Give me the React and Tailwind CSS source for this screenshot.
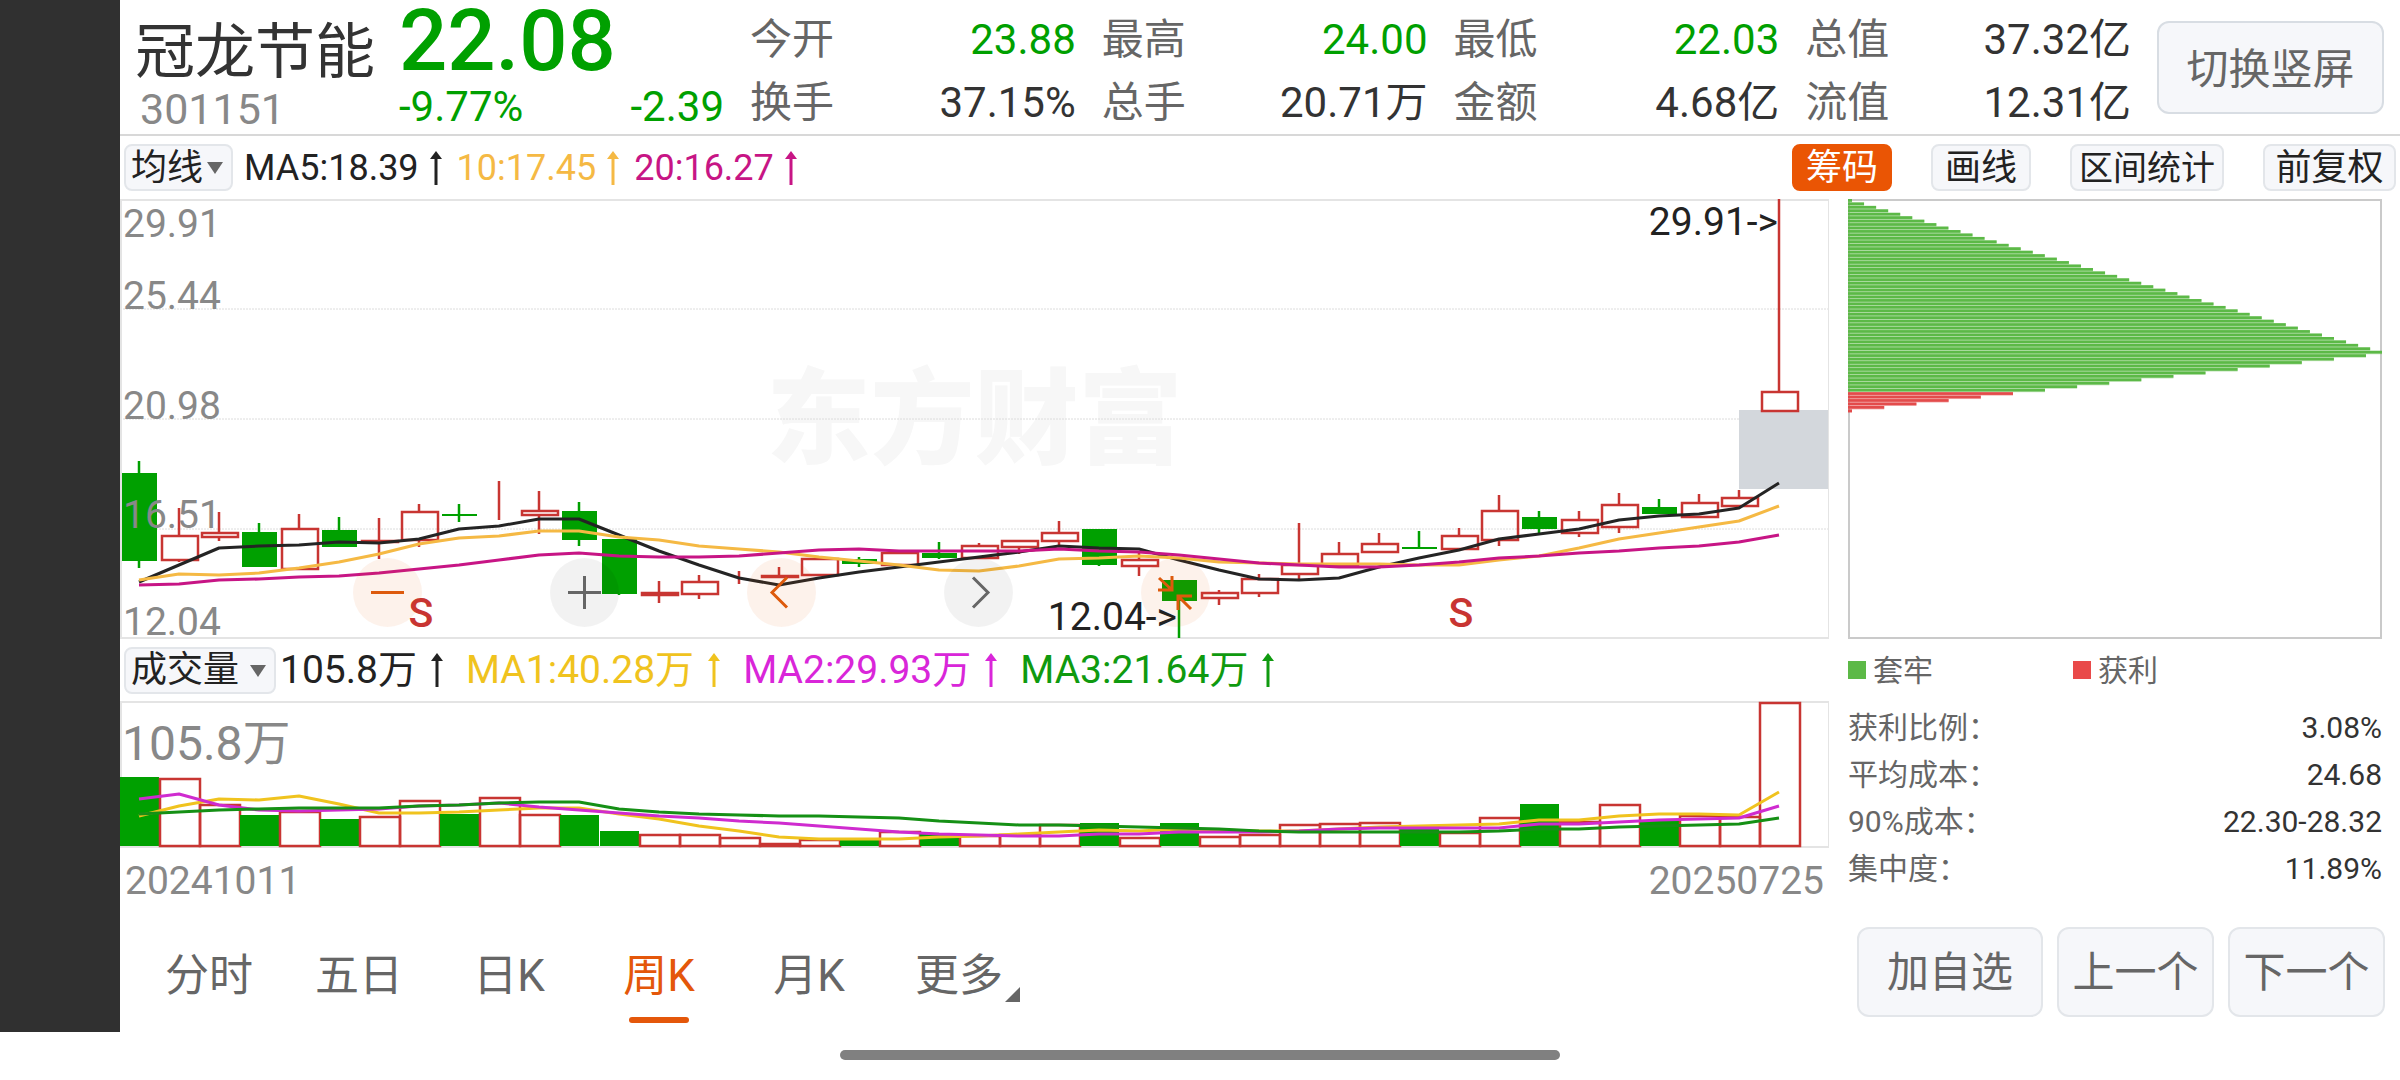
import React from 'react';
import clsx from 'clsx';

const CHART_W = 1709;
const CHART_H = 440;
const VOL_H = 147;
const STEP = 40;
const FIRST = 19;

const GREEN = '#00a000';
const RED = '#c83532';

// [direction, high, body top, body bottom, low]
const CANDLES = [
    ['d', 262, 274, 362, 369], ['u', 309, 337, 361, 363], ['u', 313, 334, 338, 342], ['d', 324, 333, 368, 368],
    ['u', 315, 330, 370, 370], ['d', 318, 331, 348, 348], ['u', 319, 342, 343, 360], ['u', 305, 313, 341, 348],
    ['d', 305, 315, 317, 323], ['u', 282, 318, 318, 321], ['u', 292, 312, 316, 335], ['d', 303, 312, 341, 347],
    ['d', 340, 340, 395, 396], ['u', 382, 394, 396, 404], ['u', 376, 383, 395, 400], ['u', 372, 380, 380, 385],
    ['u', 368, 377, 378, 379], ['u', 360, 360, 376, 377], ['d', 358, 360, 365, 368], ['u', 353, 354, 366, 366],
    ['d', 343, 354, 359, 360], ['u', 344, 347, 359, 359], ['u', 341, 342, 348, 355], ['u', 322, 334, 342, 347],
    ['d', 330, 330, 366, 367], ['u', 354, 361, 367, 377], ['d', 381, 381, 402, 439], ['u', 391, 394, 399, 406],
    ['u', 375, 380, 394, 398], ['u', 324, 366, 375, 380], ['u', 343, 355, 366, 366], ['u', 334, 345, 353, 353],
    ['d', 332, 348, 350, 350], ['u', 329, 337, 350, 350], ['u', 296, 312, 341, 347], ['d', 312, 318, 330, 334],
    ['u', 312, 321, 334, 338], ['u', 294, 306, 328, 334], ['d', 300, 308, 315, 315], ['u', 295, 304, 318, 318],
    ['u', 291, 299, 307, 307], ['u', 0, 193, 212, 212],
];

const MA5 = [383, 366, 349, 347, 346, 343, 344, 340, 330, 327, 320, 320, 336, 352, 366, 379, 386, 379, 373, 368, 363, 358, 353, 347, 349, 350, 361, 371, 380, 381, 379, 368, 359, 351, 340, 335, 330, 321, 317, 315, 309, 284];
const MA10 = [381, 375, 376, 374, 369, 363, 355, 345, 339, 337, 332, 332, 338, 341, 347, 350, 353, 358, 362, 366, 371, 372, 367, 360, 359, 357, 359, 363, 364, 365, 365, 365, 366, 366, 361, 357, 349, 340, 334, 328, 322, 307];
const MA20 = [386, 385, 381, 380, 378, 377, 374, 370, 366, 361, 356, 354, 357, 358, 358, 357, 354, 351, 350, 352, 352, 352, 352, 350, 352, 353, 356, 360, 364, 366, 368, 368, 366, 363, 359, 357, 354, 352, 349, 347, 343, 336];

const VOLUMES = [76, 78, 104, 114, 111, 118, 116, 100, 113, 97, 114, 114, 130, 134, 134, 137, 143, 139, 138, 131, 132, 135, 134, 124, 122, 137, 122, 136, 134, 124, 123, 122, 128, 132, 117, 103, 121, 104, 120, 115, 116, 2];
const VOL_MA1 = [115, 105, 98, 99, 95, 103, 112, 112, 111, 109, 107, 107, 113, 118, 125, 130, 136, 138, 138, 138, 136, 135, 133, 131, 129, 130, 128, 129, 130, 130, 128, 126, 125, 124, 123, 119, 119, 115, 113, 113, 114, 91];
const VOL_MA2 = [98, 93, 104, 109, 110, 109, 108, 105, 104, 102, 106, 109, 112, 115, 117, 120, 122, 125, 128, 131, 133, 134, 135, 135, 133, 133, 131, 131, 131, 130, 128, 127, 127, 127, 127, 123, 123, 121, 119, 118, 117, 105];
const VOL_MA3 = [113, 111, 109, 108, 107, 107, 107, 105, 104, 102, 101, 101, 108, 111, 113, 114, 115, 115, 116, 117, 120, 122, 124, 124, 125, 126, 127, 128, 130, 131, 131, 131, 131, 131, 130, 128, 128, 126, 125, 124, 123, 117];

// Width of each price level in the chip distribution
const CHIPS = [
    ...Array.from({ length: 45 }, (_, i) => ({ w: 4 + i * 12.05, loss: true })),
    ...Array.from({ length: 11 }, (_, i) => ({ w: 518 - i * 32.1, loss: true })),
    ...Array.from({ length: 6 }, (_, i) => ({ w: Math.max(4, 165 - i * 32.2), loss: false })),
];

const STATS = [
    ['今开', '23.88', true], ['最高', '24.00', true], ['最低', '22.03', true], ['总值', '37.32亿', false],
    ['换手', '37.15%', false], ['总手', '20.71万', false], ['金额', '4.68亿', false], ['流值', '12.31亿', false],
];

const CHIP_INFO = [
    ['获利比例：', '3.08%'],
    ['平均成本：', '24.68'],
    ['90%成本：', '22.30-28.32'],
    ['集中度：', '11.89%'],
];

const xAt = (i) => FIRST + i * STEP;
const toPoints = (values) => values.map((v, i) => `${xAt(i)},${v}`).join(' ');
const pct = (x) => `${(x / CHART_W) * 100}%`;

function Line({ values, color }) {
    return <polyline points={toPoints(values)} fill="none" stroke={color} strokeWidth="3" strokeLinejoin="round" />;
}

function UpArrow() {
    return (
        <svg className="w-3 h-[34px] shrink-0" viewBox="0 0 12 34" aria-hidden="true">
            <path d="M6 0 L12 8 H7.5 V34 H4.5 V8 H0 Z" fill="currentColor" />
        </svg>
    );
}

function MenuSelect({ label, value, className }) {
    return (
        <div className={clsx('relative flex items-center h-[47px] rounded-lg border-2 border-[#e3e6ea] bg-[#f6f7fa]', className)}>
            <select
                aria-label={label}
                className="w-full h-[54px] shrink-0 appearance-none bg-transparent pl-[5px] text-[36px] text-[#222]"
            >
                <option>{value}</option>
            </select>
            <svg className="absolute right-2 top-4 w-4 h-3 pointer-events-none" viewBox="0 0 16 12" aria-hidden="true">
                <path d="M0 0 H16 L8 12 Z" fill="#666" />
            </svg>
        </div>
    );
}

function Header() {
    return (
        <header className="flex h-[136px] border-b-2 border-[#d8d8d8] pr-4">
            <div className="w-[279px] pl-[15px] flex flex-col">
                <h1 className="text-[60px] leading-[60px] mt-[23px] text-[#333] whitespace-nowrap">冠龙节能</h1>
                <span className="pl-[5px] mt-[3px] text-[43px] leading-[46px] text-[#888]">301151</span>
            </div>
            <div className="w-[325px] flex flex-col text-[#00a000]">
                <span className="text-[85px] leading-[82px] font-medium">22.08</span>
                <div className="flex justify-between text-[42px] leading-[50px]">
                    <span>-9.77%</span>
                    <span>-2.39</span>
                </div>
            </div>
            <dl className="flex-1 grid grid-cols-4 auto-rows-[63px] gap-x-[26px] ml-[26px] mt-2 text-[42px] leading-[63px]">
                {STATS.map(([label, value, down]) => (
                    <div key={label} className="flex justify-between whitespace-nowrap">
                        <dt className="text-[#666]">{label}</dt>
                        <dd className={down ? 'text-[#00a000]' : 'text-[#333]'}>{value}</dd>
                    </div>
                ))}
            </dl>
            <button className="w-[227px] h-[93px] ml-[26px] mt-[21px] pt-1 rounded-xl border-2 border-[#d8dde3] bg-[#f6f7fa] text-[42px] text-[#666]">
                切换竖屏
            </button>
        </header>
    );
}

function Toolbar() {
    const button = 'h-[47px] rounded-lg border-2 leading-[42px] whitespace-nowrap';
    const plain = 'border-[#e3e6ea] bg-[#f6f7fa] text-[#222]';
    return (
        <div className="flex items-center h-[63px] px-1 text-[36px]">
            <MenuSelect label="主图指标" value="均线" className="w-[109px]" />
            <div className="flex items-center gap-[11px] ml-[11px] text-[#222]">
                <span>MA5:18.39</span>
                <UpArrow />
            </div>
            <div className="flex items-center gap-[11px] ml-[15px] text-[#f5b944]">
                <span>10:17.45</span>
                <UpArrow />
            </div>
            <div className="flex items-center gap-[11px] ml-[15px] text-[#c71585]">
                <span>20:16.27</span>
                <UpArrow />
            </div>
            <div className="flex gap-[39px] ml-auto">
                <button className={clsx(button, 'w-[100px] border-[#ea5504] bg-[#ea5504] text-white')}>筹码</button>
                <button className={clsx(button, plain, 'w-[100px]')}>画线</button>
                <button className={clsx(button, plain, 'w-[154px] text-[34px]')}>区间统计</button>
                <button className={clsx(button, plain, 'w-[133px]')}>前复权</button>
            </div>
        </div>
    );
}

function Candle({ data, i }) {
    const [dir, high, top, bottom, low] = data;
    const x = xAt(i);
    const color = dir === 'u' ? RED : GREEN;
    return (
        <g stroke={color} strokeWidth="2.5">
            <path d={`M${x} ${high} V${top} M${x} ${bottom} V${low}`} />
            {dir === 'u' ? (
                <rect x={x - 17} y={top} width="36" height={bottom - top} fill="none" />
            ) : (
                <rect x={x - 17} y={top} width="35" height={bottom - top} fill={color} stroke="none" />
            )}
        </g>
    );
}

const CONTROLS = [
    { name: '缩小', warm: true, d: 'M18 34.5 H51' },
    { name: '放大', warm: false, d: 'M18 34.5 H51 M34.5 18 V51' },
    { name: '左移', warm: true, d: 'M40 19.5 L25 34.5 L40 49.5' },
    { name: '右移', warm: false, d: 'M29 19.5 L44 34.5 L29 49.5' },
    { name: '收起', warm: true, d: 'M18 20 L31 32 M31 18 V32 H17 M37 52 V38 H51 M37 38 L50 51' },
];

function PriceChart() {
    return (
        <div className="relative h-[440px]">
            <div className="absolute inset-0 pt-1 flex items-center justify-center">
                <span className="text-[104px] leading-[104px] font-black text-[#f7f7f7]">东方财富</span>
            </div>
            <svg
                className="absolute inset-0 w-full h-full"
                viewBox={`0 0 ${CHART_W} ${CHART_H}`}
                preserveAspectRatio="none"
                role="img"
                aria-label="周K线"
            >
                {[110, 220, 330].map((y) => (
                    <path key={y} d={`M0 ${y} H${CHART_W}`} stroke="#dcdcdc" strokeWidth="1" strokeDasharray="2 1" />
                ))}
                <rect x="1619" y="211" width="90" height="79" fill="#d3d7dc" />
                <rect x="1" y="1" width={CHART_W - 1} height={CHART_H - 2} fill="none" stroke="#e4e4e4" strokeWidth="2" />
                {CANDLES.map((c, i) => (
                    <Candle key={i} data={c} i={i} />
                ))}
                <Line values={MA5} color="#242424" />
                <Line values={MA10} color="#f5b944" />
                <Line values={MA20} color="#c71585" />
            </svg>
            <div className="absolute inset-0 top-px grid grid-rows-4 pl-[3px] text-[39px] leading-[28px] text-[#888]">
                <div className="flex flex-col justify-between pt-[10px]">
                    <span>29.91</span>
                    <span>25.44</span>
                </div>
                <span className="self-end">20.98</span>
                <span className="self-end">16.51</span>
                <span className="self-end pb-[3px]">12.04</span>
            </div>
            {[293, 1333].map((x) => (
                <span
                    key={x}
                    className="absolute top-[395px] w-8 text-center text-[41px] leading-[39px] font-medium text-[#c83532]"
                    style={{ left: pct(x - 8) }}
                >
                    S
                </span>
            ))}
            <span className="absolute top-[8px] text-[39px] leading-[30px] text-[#222]" style={{ right: pct(51) }}>
                29.91-&gt;
            </span>
            {CONTROLS.map(({ name, warm, d }, i) => (
                <button
                    key={name}
                    aria-label={name}
                    className={clsx(
                        'absolute top-[359px] w-[69px] h-[69px] rounded-full',
                        warm ? 'bg-[#ea5504]/8 text-[#dd5a0c]' : 'bg-black/5 text-[#666]'
                    )}
                    style={{ left: pct(233 + i * 197) }}
                >
                    <svg viewBox="0 0 69 69" className="w-full h-full">
                        <path d={d} fill="none" stroke="currentColor" strokeWidth="3" />
                    </svg>
                </button>
            ))}
            <span className="absolute top-[403px] text-[39px] leading-[30px] text-[#222]" style={{ right: pct(652) }}>
                12.04-&gt;
            </span>
        </div>
    );
}

function VolumeLegend() {
    return (
        <div className="flex items-center h-[62px] pl-1 text-[39px] whitespace-nowrap">
            <MenuSelect label="副图指标" value="成交量" className="w-[152px]" />
            <div className="flex items-center gap-[14px] ml-1 text-[#222]">
                <span>105.8万</span>
                <UpArrow />
            </div>
            <div className="flex items-center gap-[14px] ml-[23px] text-[#f0c31e]">
                <span>MA1:40.28万</span>
                <UpArrow />
            </div>
            <div className="flex items-center gap-[14px] ml-[23px] text-[#d926d9]">
                <span>MA2:29.93万</span>
                <UpArrow />
            </div>
            <div className="flex items-center gap-[14px] ml-[23px] text-[#0f9a0f]">
                <span>MA3:21.64万</span>
                <UpArrow />
            </div>
        </div>
    );
}

function VolumeChart() {
    return (
        <div className="relative h-[147px]">
            <svg
                className="absolute inset-0 w-full h-full"
                viewBox={`0 0 ${CHART_W} ${VOL_H}`}
                preserveAspectRatio="none"
                role="img"
                aria-label="成交量"
            >
                <rect x="1" y="1" width={CHART_W - 1} height={VOL_H - 2} fill="none" stroke="#e4e4e4" strokeWidth="2" />
                {VOLUMES.map((top, i) =>
                    CANDLES[i][0] === 'u' ? (
                        <rect
                            key={i}
                            x={xAt(i) + 1 - STEP / 2}
                            y={top}
                            width={STEP}
                            height={145 - top}
                            fill="none"
                            stroke={RED}
                            strokeWidth="2.5"
                        />
                    ) : (
                        <rect key={i} x={xAt(i) - 19} y={top} width="39" height={145 - top} fill={GREEN} />
                    )
                )}
                <Line values={VOL_MA1} color="#f0c31e" />
                <Line values={VOL_MA2} color="#cf2bcf" />
                <Line values={VOL_MA3} color="#159015" />
            </svg>
            <span className="absolute top-[15px] left-[2px] text-[48px] leading-[56px] text-[#888]">105.8万</span>
        </div>
    );
}

function ChipPanel() {
    return (
        <aside className="w-[571px] pl-[19px] pr-[18px]">
            <svg className="block w-full h-[440px]" viewBox="0 0 534 440" preserveAspectRatio="none" role="img" aria-label="筹码分布">
                <rect x="1" y="1" width="532" height="438" fill="none" stroke="#cacaca" strokeWidth="2" />
                {CHIPS.map(({ w, loss }, i) => (
                    <g key={i} fill={loss ? '#5cb947' : '#e34b4b'}>
                        <rect x="0" y={i * 3.45} width={w} height="3.45" opacity="0.4" />
                        <rect x="0" y={i * 3.45} width={w} height="2.7" />
                    </g>
                ))}
            </svg>
            <div className="flex items-center h-[62px] text-[30px] text-[#666]">
                <div className="flex items-center gap-[7px] w-[225px]">
                    <i className="w-[18px] h-[18px] bg-[#5cb947]" />
                    <span>套牢</span>
                </div>
                <div className="flex items-center gap-[7px]">
                    <i className="w-[18px] h-[18px] bg-[#e94a4a]" />
                    <span>获利</span>
                </div>
            </div>
            <dl className="pt-[3px] text-[30px] leading-[47px]">
                {CHIP_INFO.map(([label, value]) => (
                    <div key={label} className="flex justify-between">
                        <dt className="text-[#666]">{label}</dt>
                        <dd className="text-[#333]">{value}</dd>
                    </div>
                ))}
            </dl>
        </aside>
    );
}

function BottomBar() {
    const action = 'h-[90px] rounded-xl border-2 border-[#e3e6ea] bg-[#f6f7fa] text-[42px] text-[#666] whitespace-nowrap';
    return (
        <div className="flex items-center h-[120px] pl-[14px] pr-[15px]">
            <nav className="flex h-full text-[44px] text-[#666]">
                {['分时', '五日', '日K', '周K', '月K', '更多'].map((tab) => (
                    <button
                        key={tab}
                        className={clsx(
                            'relative w-[150px] h-full pt-2 flex items-center justify-center',
                            tab === '周K' && 'text-[#e4570a]'
                        )}
                    >
                        {tab}
                        {tab === '周K' && <span className="absolute bottom-[9px] w-[60px] h-[6px] rounded-full bg-[#e4570a]" />}
                        {tab === '更多' && (
                            <svg className="absolute right-[14px] bottom-[30px] w-[15px] h-[15px]" viewBox="0 0 15 15">
                                <path d="M15 0 V15 H0 Z" fill="#666" />
                            </svg>
                        )}
                    </button>
                ))}
            </nav>
            <div className="flex gap-[14px] ml-auto">
                <button className={clsx(action, 'w-[186px]')}>加自选</button>
                <button className={clsx(action, 'w-[157px]')}>上一个</button>
                <button className={clsx(action, 'w-[157px]')}>下一个</button>
            </div>
        </div>
    );
}

export default function App() {
    return (
        <div className="min-h-screen bg-white font-['Roboto','Noto_Sans_CJK_SC',sans-serif]">
            <div className="flex">
                <div className="w-[120px] shrink-0 bg-[#303030]" />
                <main className="flex-1 min-w-0">
                    <Header />
                    <Toolbar />
                    <div className="flex">
                        <section className="flex-1 min-w-0">
                            <PriceChart />
                            <VolumeLegend />
                            <VolumeChart />
                            <div className="flex items-center justify-between h-16 pt-[2px] px-[5px] text-[39px] text-[#888]">
                                <span>20241011</span>
                                <span>20250725</span>
                            </div>
                        </section>
                        <ChipPanel />
                    </div>
                    <BottomBar />
                </main>
            </div>
            <div className="flex justify-center pt-[18px] pb-5">
                <div className="w-[30%] h-[10px] rounded-full bg-[#808080]" />
            </div>
        </div>
    );
}
